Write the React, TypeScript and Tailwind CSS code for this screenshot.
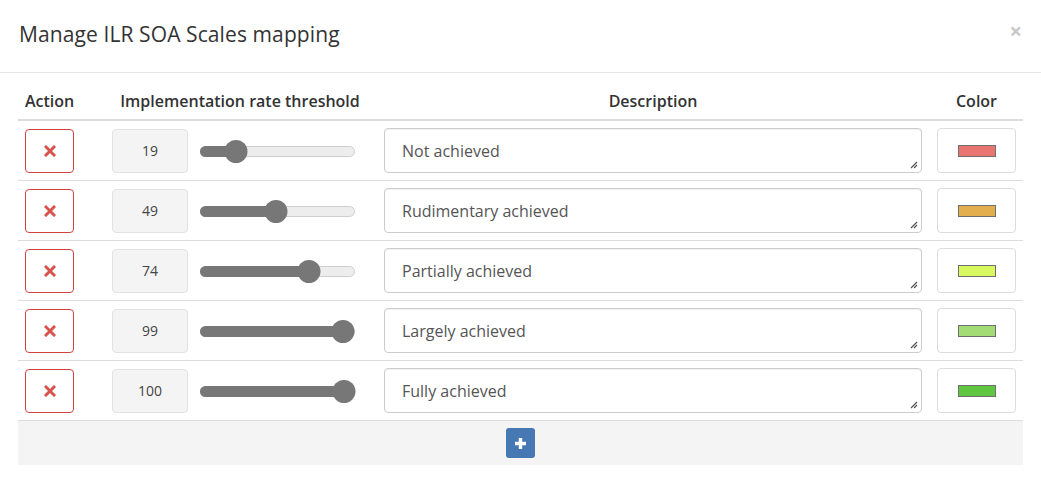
import { useState } from "react";

type Scale = { value: number; text: string; color: string };

const initial: Scale[] = [
  { value: 19, text: "Not achieved", color: "#e8756f" },
  { value: 49, text: "Rudimentary achieved", color: "#e3ae4e" },
  { value: 74, text: "Partially achieved", color: "#d9f75e" },
  { value: 99, text: "Largely achieved", color: "#a3dc74" },
  { value: 100, text: "Fully achieved", color: "#5ec63f" },
];

function Slider({ value }: { value: number }) {
  // thumb centre moves between 11px and 144px of the 155px track
  const left = 11 + (133 * value) / 100;
  return (
    <div className="relative h-[22px] w-[155px]">
      <div className="absolute left-0 right-0 top-[6px] h-[11px] rounded-full border border-[#cfcfcf] bg-[#ededed]" />
      <div
        className="absolute left-0 top-[6px] h-[11px] rounded-full bg-[#777]"
        style={{ width: left + 2 }}
      />
      <div
        className="absolute top-0 h-[23px] w-[23px] -translate-x-1/2 rounded-full bg-[#777]"
        style={{ left }}
      />
    </div>
  );
}

function Grip() {
  return (
    <svg width="9" height="9" viewBox="0 0 9 9" className="absolute bottom-[3px] right-[3px]">
      <path d="M8 2 L2 8 M8 5 L5 8" stroke="#555" strokeWidth="1.2" />
    </svg>
  );
}

export default function App() {
  const [rows] = useState(initial);

  return (
    <div className="h-[487px] w-[1041px] bg-white text-[#333]" style={{ fontFamily: "'Open Sans', Lato, sans-serif" }}>
      {/* header */}
      <div className="flex h-[73px] items-center justify-between border-b border-[#e5e5e5] pl-[19px] pr-[19px]">
        <h4 className="pb-[2px] text-[21px] font-normal tracking-[0.1px] text-[#333]">Manage ILR SOA Scales mapping</h4>
        <span className="-mt-[12px] text-[22px] font-bold leading-none text-[#c8c8c8]">×</span>
      </div>

      {/* body */}
      <div className="px-[18px] pt-[10px]">
        <div className="grid grid-cols-[86px_272px_554px_94px] border-b-2 border-[#dddddd] text-[16px] font-semibold text-[#333]">
          <div className="flex h-[36px] items-center pl-[7px]"><span className="w-[49px] text-center">Action</span></div>
          <div className="flex h-[36px] items-center justify-center">Implementation rate threshold</div>
          <div className="flex h-[36px] items-center justify-center">Description</div>
          <div className="flex h-[36px] items-center pl-[7px]"><span className="w-[79px] text-center">Color</span></div>
        </div>

        {rows.map((r, i) => (
          <div key={i} className="grid h-[60px] grid-cols-[86px_272px_554px_94px] items-center border-b border-[#dddddd]">
            <div className="pl-[7px]">
              <button className="flex h-[44px] w-[49px] items-center justify-center rounded-[4px] border border-[#d0433d] bg-white">
                <svg width="12" height="12" viewBox="0 0 12 12">
                  <path d="M2 2 L10 10 M10 2 L2 10" stroke="#d9534f" strokeWidth="3" strokeLinecap="square" />
                </svg>
              </button>
            </div>
            <div className="flex items-center gap-[12px] pl-[8px]">
              <div className="flex h-[44px] w-[76px] items-center justify-center rounded-[4px] border border-[#e3e3e3] bg-[#f4f4f4] text-[14px] text-[#444]">
                {r.value}
              </div>
              <Slider value={r.value} />
            </div>
            <div className="pl-[8px]">
              <div className="relative flex h-[45px] w-[538px] items-center rounded-[4px] border border-[#cccccc] pl-[17px] pt-[1px] text-[16px] text-[#555] shadow-[inset_0_1px_1px_rgba(0,0,0,0.06)]">
                {r.text}
                <Grip />
              </div>
            </div>
            <div className="pl-[7px]">
              <div className="flex h-[45px] w-[79px] items-center justify-center rounded-[4px] border border-[#dcdcdc]">
                <div className="h-[12px] w-[38px] border border-[#6f6f6f]" style={{ background: r.color }} />
              </div>
            </div>
          </div>
        ))}

        <div className="flex h-[44px] items-center justify-center bg-[#f4f4f4]">
          <button className="flex h-[30px] w-[29px] items-center justify-center rounded-[3px] bg-[#4679b4]">
            <svg width="13" height="13" viewBox="0 0 13 13">
              <path d="M6.5 1 V12 M1 6.5 H12" stroke="#fff" strokeWidth="3.4" />
            </svg>
          </button>
        </div>
      </div>
    </div>
  );
}
